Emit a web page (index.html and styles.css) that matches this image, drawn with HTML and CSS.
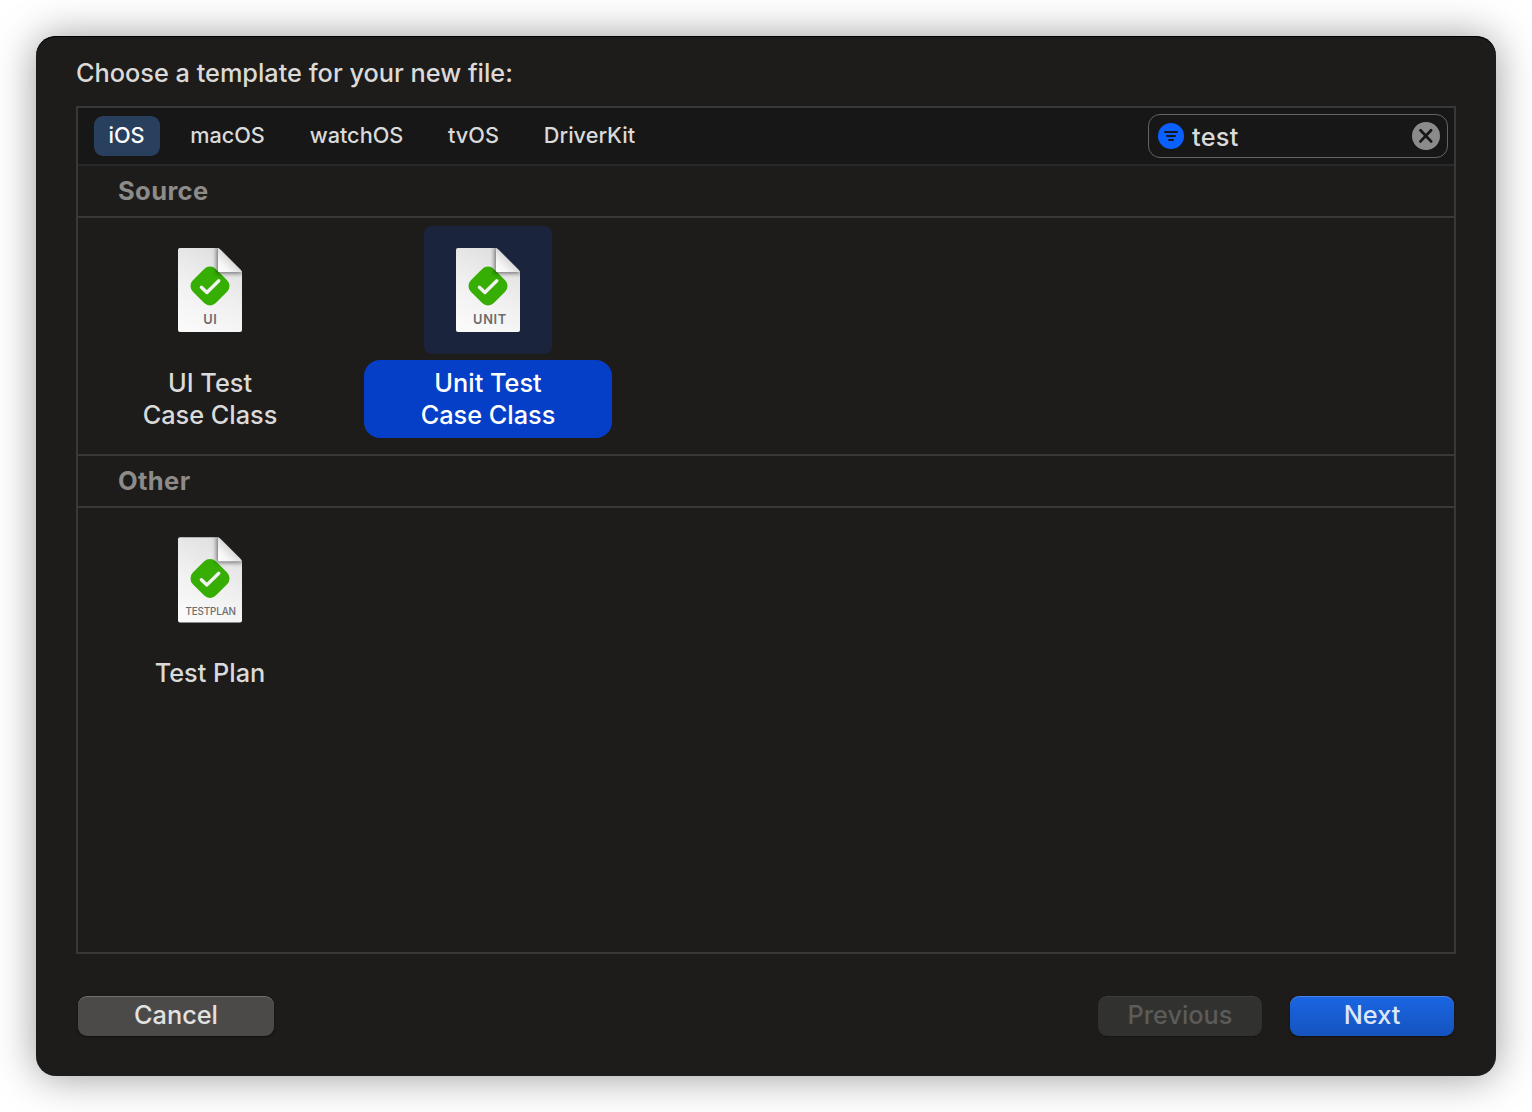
FILE: index.html
```html
<!DOCTYPE html>
<html lang="en">
<head>
<meta charset="utf-8">
<title>New File</title>
<link rel="stylesheet" href="styles.css">
</head>
<body>
<svg class="defs" width="0" height="0" aria-hidden="true">
  <defs>
    <linearGradient id="paper" x1="0.7" y1="0" x2="0.3" y2="1">
      <stop offset="0" stop-color="#dedede"/>
      <stop offset="0.5" stop-color="#efefef"/>
      <stop offset="1" stop-color="#fafafa"/>
    </linearGradient>
    <linearGradient id="fold" x1="0" y1="1" x2="0.55" y2="0.45">
      <stop offset="0" stop-color="#ffffff"/>
      <stop offset="0.45" stop-color="#f6f6f6"/>
      <stop offset="1" stop-color="#d6d6d6"/>
    </linearGradient>
    <filter id="soft" x="-50%" y="-50%" width="200%" height="200%">
      <feGaussianBlur stdDeviation="2"/>
    </filter>
    <clipPath id="sheet">
      <path d="M34 22H72L96 46V104Q96 106 94 106H34Q32 106 32 104V24Q32 22 34 22Z"/>
    </clipPath>
    <g id="page">
      <path d="M34 22H72L96 46V104Q96 106 94 106H34Q32 106 32 104V24Q32 22 34 22Z" fill="url(#paper)"/>
    </g>
    <g id="corner">
      <g clip-path="url(#sheet)">
        <path d="M70.5 20V47.5H98L72 20Z" fill="#000" opacity="0.5" filter="url(#soft)"/>
      </g>
      <path d="M72 22Q73.500 22.300 75 24L94 43Q95.700 44.700 96 46H73Q72 46 72 45Z" fill="url(#fold)"/>
    </g>
    <g id="badge">
      <rect x="47.800" y="43.800" width="32.400" height="32.400" rx="8.200" transform="rotate(45 64 60)" fill="#36ae04"/>
      <path d="M55.400 61.300L60.900 66.500L72.800 54.800" fill="none" stroke="#f2f2f2" stroke-width="3.400" stroke-linecap="round" stroke-linejoin="round"/>
    </g>
  </defs>
</svg>

<main class="dialog">
  <h1 class="title">Choose a template for your new file:</h1>

  <section class="panel">
    <div class="toolbar">
      <nav class="tabs">
        <button class="tab tab-ios selected">iOS</button>
        <button class="tab tab-macos">macOS</button>
        <button class="tab tab-watchos">watchOS</button>
        <button class="tab tab-tvos">tvOS</button>
        <button class="tab tab-driverkit">DriverKit</button>
      </nav>
      <div class="search">
        <svg width="26" height="26" viewBox="0 0 26 26">
          <circle cx="13" cy="13" r="13" fill="#0a60ff"/>
          <path d="M7 9H19M9 13H17M11 17H15" stroke="#171717" stroke-width="2" stroke-linecap="round"/>
        </svg>
        <span class="query">test</span>
        <svg width="28" height="28" viewBox="0 0 28 28">
          <circle cx="14" cy="14" r="14" fill="#8b8b8b"/>
          <path d="M8.500 8.200L19.100 19.400M19.100 8.200L8.500 19.400" stroke="#171717" stroke-width="2.800" stroke-linecap="round"/>
        </svg>
      </div>
    </div>

    <h2 class="group">Source</h2>
    <div class="grid">
      <div class="item">
        <svg class="thumb" width="128" height="128" viewBox="0 0 128 128">
          <use href="#page"/><use href="#badge"/><use href="#corner"/>
          <text class="ext" x="64" y="98" textLength="13.4">UI</text>
        </svg>
        <div class="label">UI Test<br>Case Class</div>
      </div>
      <div class="item chosen">
        <svg class="thumb" width="128" height="128" viewBox="0 0 128 128">
          <use href="#page"/><use href="#badge"/><use href="#corner"/>
          <text class="ext" x="65.6" y="98" textLength="33">UNIT</text>
        </svg>
        <div class="label">Unit Test<br>Case Class</div>
      </div>
    </div>

    <h2 class="group ruled">Other</h2>
    <div class="grid">
      <div class="item">
        <svg class="thumb" width="128" height="128" viewBox="0 0 128 128">
          <g transform="translate(0 -1.1) scale(1 1.016)"><use href="#page"/></g>
          <g transform="translate(0 2.4)"><use href="#badge"/></g>
          <g transform="translate(0 -0.8)"><use href="#corner"/></g>
          <text class="ext small" x="64.7" y="99.2" textLength="50.4">TESTPLAN</text>
        </svg>
        <div class="label">Test Plan</div>
      </div>
    </div>
  </section>

  <footer class="actions">
    <button class="btn cancel">Cancel</button>
    <button class="btn previous" disabled>Previous</button>
    <button class="btn next">Next</button>
  </footer>
</main>
</body>
</html>
```
FILE: styles.css
```css
* { box-sizing: border-box; }

body {
  margin: 0;
  width: 1532px;
  height: 1112px;
  padding: 36px;
  background: #fff;
  overflow: hidden;
  font-family: Inter, "Liberation Sans", sans-serif;
  font-size: 25.3px;
  font-weight: 450;
  color: #dadada;
}

.defs { position: absolute; }

button {
  font: inherit;
  color: inherit;
  border: 0;
  padding: 0;
  background: none;
}

.dialog {
  display: flex;
  flex-direction: column;
  width: 1460px;
  height: 1040px;
  padding: 20px 40px 40px;
  border-radius: 20px;
  background: #1d1c1a;
  box-shadow: inset 0 1px 0 #000, 0 1px 42px rgba(0, 0, 0, 0.4);
}

.title {
  margin: 0 0 17px;
  font-size: inherit;
  font-weight: 450;
  line-height: 33px;
  color: #dbdad8;
}

.panel {
  height: 848px;
  border: 2px solid #383838;
  display: flex;
  flex-direction: column;
}

.toolbar {
  display: flex;
  justify-content: space-between;
  height: 58px;
  padding: 6px 6px 0 16px;
  background: #171717;
  border-bottom: 2px solid #292929;
}

.tabs {
  display: flex;
  gap: 16px;
  padding-top: 2px;
}

.tab {
  height: 40px;
  padding: 0 1px 2px 0;
  border-radius: 9px;
  font-size: 21.7px;
  font-weight: 500;
  white-space: nowrap;
}

.tab-ios { width: 66px; }
.tab-macos { width: 104px; }
.tab-watchos { width: 122px; }
.tab-tvos { width: 80px; }
.tab-driverkit { width: 120px; }

.selected { background: #283f5d; color: #fff; }

.search {
  display: flex;
  align-items: center;
  width: 300px;
  height: 44px;
  padding: 0 7px 0 9px;
  border: 1px solid #646464;
  border-radius: 12px;
}

.query {
  flex: 1;
  padding: 1px 0 0 8px;
  letter-spacing: 0.3px;
}

.group {
  margin: 0;
  height: 52px;
  padding-left: 40px;
  border-bottom: 2px solid #383838;
  font-size: 25.5px;
  font-weight: 700;
  line-height: 50px;
  letter-spacing: 0.4px;
  color: #8c8b89;
}

.ruled {
  height: 54px;
  border-top: 2px solid #383838;
}

.grid {
  display: flex;
  gap: 30px;
  height: 236px;
  padding: 8px;
}

.item { width: 248px; text-align: center; }

.thumb {
  display: block;
  margin: 0 auto 6px;
  border-radius: 8px;
}

.label {
  height: 78px;
  padding-top: 7px;
  border-radius: 16px;
  line-height: 32px;
}

.chosen .thumb { background: #1b243d; }
.chosen .label { background: #063fc7; color: #fff; }

.ext {
  font-size: 12.8px;
  font-weight: 600;
  fill: #6c6c6c;
  text-anchor: middle;
}

.small { font-size: 9.8px; font-weight: 500; }

.actions {
  display: flex;
  gap: 28px;
  padding: 42px 2px 0;
}

.btn {
  width: 164px;
  height: 40px;
  padding-bottom: 3px;
  border-radius: 9px;
  line-height: 31px;
  box-shadow: inset 0 1px 0 rgba(255, 255, 255, 0.2), 0 1px 2px rgba(0, 0, 0, 0.5);
}

.cancel { width: 196px; margin-right: auto; background: #4b4a48; color: #e2e2e1; }

.previous {
  background: #31312f;
  color: #5c5b5a;
  box-shadow: inset 0 1px 0 rgba(255, 255, 255, 0.06), 0 1px 1px rgba(0, 0, 0, 0.2);
}

.next {
  background: linear-gradient(#1a66e4, #1553bd);
  color: #dde6f8;
}
```
